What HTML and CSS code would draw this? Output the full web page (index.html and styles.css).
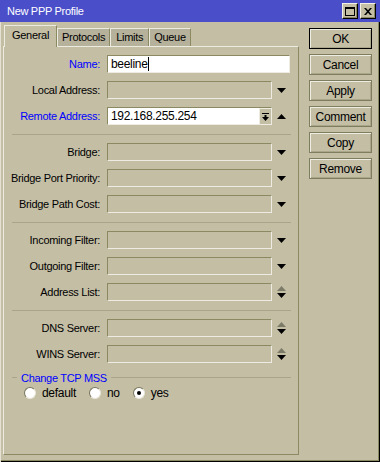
FILE: index.html
```html
<!DOCTYPE html>
<html>
<head>
<meta charset="UTF-8">
<title>New PPP Profile</title>
<link rel="stylesheet" href="styles.css">
</head>
<body>
<div class="win">
  <div class="title">
    <span class="title-text">New PPP Profile</span>
    <span class="tbtn tbtn-first">
      <svg width="10" height="9" viewBox="0 0 10 9"><rect x="0.5" y="0.5" width="9" height="8" fill="none" stroke="#000"/><rect x="0" y="0" width="10" height="2" fill="#000"/></svg>
    </span>
    <span class="tbtn">
      <svg width="8" height="7" viewBox="0 0 8 7"><path d="M0 0h2l2 2.2 2-2.2h2l-3 3.5 3 3.5h-2l-2-2.2-2 2.2h-2l3-3.5z" fill="#000"/></svg>
    </span>
  </div>

  <div class="body">
    <div class="main">
      <div class="tabs">
        <div class="tab active">General</div>
        <div class="tab">Protocols</div>
        <div class="tab">Limits</div>
        <div class="tab">Queue</div>
      </div>

      <div class="panel">
        <div class="row">
          <span class="lbl blue">Name:</span>
          <div class="field wide on"><span class="val">beeline</span><span class="caret"></span></div>
        </div>
        <div class="row">
          <span class="lbl">Local Address:</span>
          <div class="field"></div>
          <span class="arr"><svg width="9" height="5" viewBox="0 0 9 5"><path d="M0 0h9l-4.5 5z" fill="#000"/></svg></span>
        </div>
        <div class="row">
          <span class="lbl blue">Remote Address:</span>
          <div class="field on">
            <span class="val grow">192.168.255.254</span>
            <span class="inbtn"><svg width="7" height="8" viewBox="0 0 7 8"><rect x="0" y="0" width="7" height="1" fill="#000"/><rect x="2.5" y="2" width="2" height="2" fill="#000"/><path d="M0 4h7l-3.5 4z" fill="#000"/></svg></span>
          </div>
          <span class="arr"><svg width="9" height="5" viewBox="0 0 9 5"><path d="M0 5h9l-4.5-5z" fill="#000"/></svg></span>
        </div>

        <div class="sep"></div>

        <div class="row">
          <span class="lbl">Bridge:</span>
          <div class="field"></div>
          <span class="arr"><svg width="9" height="5" viewBox="0 0 9 5"><path d="M0 0h9l-4.5 5z" fill="#000"/></svg></span>
        </div>
        <div class="row">
          <span class="lbl">Bridge Port Priority:</span>
          <div class="field"></div>
          <span class="arr"><svg width="9" height="5" viewBox="0 0 9 5"><path d="M0 0h9l-4.5 5z" fill="#000"/></svg></span>
        </div>
        <div class="row">
          <span class="lbl">Bridge Path Cost:</span>
          <div class="field"></div>
          <span class="arr"><svg width="9" height="5" viewBox="0 0 9 5"><path d="M0 0h9l-4.5 5z" fill="#000"/></svg></span>
        </div>

        <div class="sep"></div>

        <div class="row">
          <span class="lbl">Incoming Filter:</span>
          <div class="field"></div>
          <span class="arr"><svg width="9" height="5" viewBox="0 0 9 5"><path d="M0 0h9l-4.5 5z" fill="#000"/></svg></span>
        </div>
        <div class="row">
          <span class="lbl">Outgoing Filter:</span>
          <div class="field"></div>
          <span class="arr"><svg width="9" height="5" viewBox="0 0 9 5"><path d="M0 0h9l-4.5 5z" fill="#000"/></svg></span>
        </div>
        <div class="row">
          <span class="lbl">Address List:</span>
          <div class="field"></div>
          <span class="arr"><svg width="9" height="12" viewBox="0 0 9 12"><path d="M0 5h9l-4.5-5z" fill="#7c7b68"/><path d="M0 7h9l-4.5 5z" fill="#000"/></svg></span>
        </div>

        <div class="sep"></div>

        <div class="row">
          <span class="lbl">DNS Server:</span>
          <div class="field"></div>
          <span class="arr"><svg width="9" height="12" viewBox="0 0 9 12"><path d="M0 5h9l-4.5-5z" fill="#7c7b68"/><path d="M0 7h9l-4.5 5z" fill="#000"/></svg></span>
        </div>
        <div class="row">
          <span class="lbl">WINS Server:</span>
          <div class="field"></div>
          <span class="arr"><svg width="9" height="12" viewBox="0 0 9 12"><path d="M0 5h9l-4.5-5z" fill="#7c7b68"/><path d="M0 7h9l-4.5 5z" fill="#000"/></svg></span>
        </div>

        <div class="grp"><span class="grp-title">Change TCP MSS</span></div>
        <div class="radios">
          <span class="radio"></span><span class="rlbl">default</span>
          <span class="radio"></span><span class="rlbl">no</span>
          <span class="radio checked"></span><span class="rlbl">yes</span>
        </div>
      </div>
    </div>

    <div class="side">
      <div class="btn default">OK</div>
      <div class="btn">Cancel</div>
      <div class="btn">Apply</div>
      <div class="btn gap">Comment</div>
      <div class="btn">Copy</div>
      <div class="btn">Remove</div>
    </div>
  </div>
</div>
</body>
</html>
```

FILE: styles.css
```css
* {
	box-sizing: border-box;
}

body {
	margin: 0;
	background-color: #c4bea5;
	font-family: "Liberation Sans", Arial, sans-serif;
	font-size: 11px;
	letter-spacing: -0.3px;
	color: #000;
}

.win
{
	width: 380px;
	height: 462px;
	display: flex;
	flex-direction: column;
	background-color: #c4bea5;
}

.title
{
	height: 22px;
	flex: none;
	display: flex;
	align-items: center;
	padding: 0 4px 0 7px;
	background-color: #4a4ec9;
	color: #fff;
}

.title-text
{
	flex: 1;
}

.tbtn
{
	width: 16px;
	height: 16px;
	display: flex;
	align-items: center;
	justify-content: center;
	background-color: #c4bea5;
	border: 1px solid;
	border-color: #f2f0e6 #000 #000 #f2f0e6;
	box-shadow: inset -1px -1px #8a8962;
}

.tbtn-first
{
	margin-right: 2px;
}

.body
{
	flex: 1;
	display: flex;
	padding: 3px 0 0 3px;
	box-shadow: inset 1px 0 #e4e1d2, inset -1px -1px #000, inset -2px -2px #8a8962;
}

.main
{
	width: 296px;
	display: flex;
	flex-direction: column;
}

.tabs
{
	height: 21px;
	display: flex;
	align-items: flex-end;
	padding-left: 1px;
}

.tab
{
	height: 18px;
	min-width: 39px;
	line-height: 17px;
	padding: 0 4px;
	text-align: center;
	background-color: #b5b19b;
	border-top: 1px solid #ecebe0;
	border-left: 1px solid #ecebe0;
	border-right: 1px solid #8a8962;
}

.tab.active
{
	height: 22px;
	line-height: 19px;
	padding: 0 7px;
	margin-bottom: -1px;
	background-color: #c4bea5;
	position: relative;
	z-index: 1;
}

.panel
{
	height: 409px;
	border: 1px solid;
	border-color: #ecebe0 #8a8962 #8a8962 #ecebe0;
	display: flex;
	flex-direction: column;
}

.row
{
	height: 18px;
	margin-top: 8px;
	display: flex;
	align-items: center;
}

.lbl
{
	width: 96px;
	margin-right: 7px;
	text-align: right;
	white-space: nowrap;
}

.blue
{
	color: #0000ff;
}

.field
{
	width: 165px;
	height: 18px;
	display: flex;
	align-items: center;
	padding-left: 3px;
	border: 1px solid;
	border-color: #8a8962 #eeece2 #eeece2 #8a8962;
}

.field.wide
{
	width: 183px;
}

.field.on
{
	background-color: #fff;
	font-size: 12px;
}

.grow
{
	flex: 1;
}

.caret
{
	width: 1px;
	height: 14px;
	background-color: #000;
}

.inbtn
{
	width: 12px;
	height: 16px;
	display: flex;
	align-items: center;
	justify-content: center;
	background-color: #c4bea5;
	border-left: 1px solid #ecebe0;
	border-top: 1px solid #ecebe0;
}

.arr
{
	width: 18px;
	height: 18px;
	display: flex;
	align-items: center;
	justify-content: center;
	padding-left: 1px;
}

.sep
{
	height: 1px;
	margin: 9px 7px 0 8px;
	background-color: #a9a58c;
}

.grp
{
	height: 13px;
	margin: 8px 7px 0 8px;
	display: flex;
	align-items: center;
	color: #0000ff;
}

.grp::before,
.grp::after
{
	content: "";
	height: 1px;
	background-color: #a9a58c;
}

.grp::before
{
	width: 5px;
}

.grp::after
{
	flex: 1;
}

.grp-title
{
	padding: 0 4px;
}

.radios
{
	height: 12px;
	margin-top: 3px;
	padding-left: 20px;
	display: flex;
	align-items: center;
}

.radio
{
	width: 12px;
	height: 12px;
	border-radius: 50%;
	background-color: #fff;
	border: 1px solid;
	border-color: #77755c #e8e6da #e8e6da #77755c;
	display: flex;
	align-items: center;
	justify-content: center;
}

.radio.checked::after
{
	content: "";
	width: 4px;
	height: 4px;
	border-radius: 50%;
	background-color: #000;
}

.rlbl
{
	margin: 0 13px 0 6px;
	font-size: 12px;
}

.side
{
	width: 63px;
	margin-left: 10px;
	padding-top: 3px;
}

.btn
{
	height: 21px;
	margin-bottom: 5px;
	display: flex;
	align-items: center;
	justify-content: center;
	font-size: 12px;
	border: 1px solid #7f7d5f;
	box-shadow: inset 1px 1px #eeede2, inset -1px -1px #a9a68a;
}

.btn.default
{
	border-color: #000;
}

.btn.gap
{
	margin-top: 5px;
}
```
